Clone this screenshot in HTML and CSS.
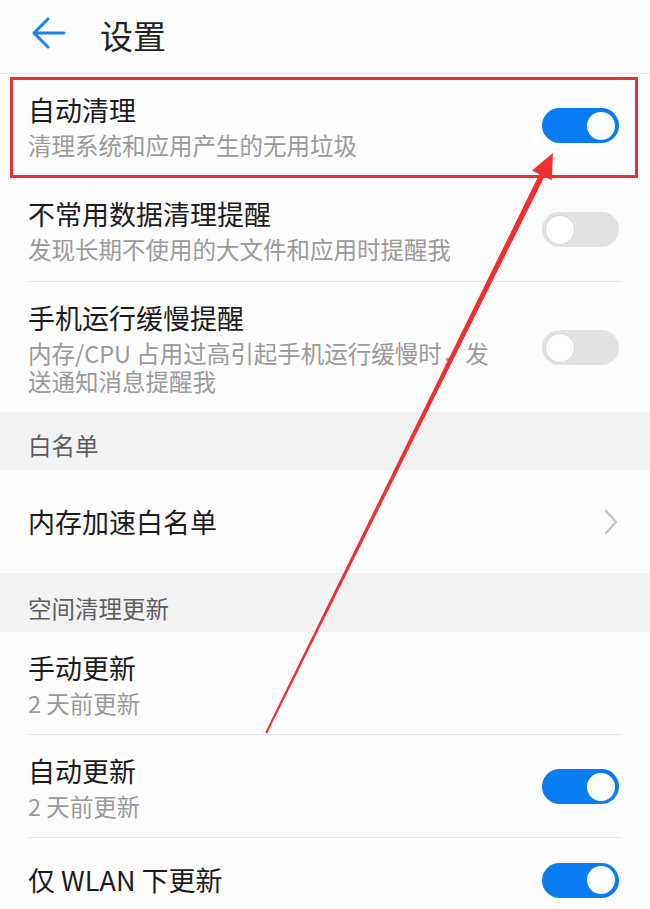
FILE: index.html
```html
<!DOCTYPE html>
<html lang="zh-CN">
<head>
<meta charset="utf-8">
<title>设置</title>
<link rel="stylesheet" href="styles.css">
</head>
<body>
<div class="page">
  <header class="topbar">
    <svg class="back" width="34" height="32" viewBox="0 0 34 32" aria-hidden="true">
      <path d="M32 16 H3 M16 2 L2 16 L16 30" fill="none" stroke="#1f80f0" stroke-width="3" stroke-linecap="round" stroke-linejoin="round"/>
    </svg>
    <h1 class="title">设置</h1>
  </header>

  <div class="row two">
    <div class="text">
      <div class="name">自动清理</div>
      <div class="desc">清理系统和应用产生的无用垃圾</div>
    </div>
    <span class="switch on"><span class="knob"></span></span>
  </div>
  <div class="divider"></div>

  <div class="row two">
    <div class="text">
      <div class="name">不常用数据清理提醒</div>
      <div class="desc">发现长期不使用的大文件和应用时提醒我</div>
    </div>
    <span class="switch"><span class="knob"></span></span>
  </div>
  <div class="divider"></div>

  <div class="row two tight">
    <div class="text">
      <div class="name">手机运行缓慢提醒</div>
      <div class="desc">内存/CPU 占用过高引起手机运行缓慢时，发送通知消息提醒我</div>
    </div>
    <span class="switch"><span class="knob"></span></span>
  </div>

  <div class="section">白名单</div>

  <div class="row single">
    <div class="text"><div class="name">内存加速白名单</div></div>
    <svg class="chev" width="14" height="26" viewBox="0 0 14 26" aria-hidden="true">
      <path d="M2 2 L12 13 L2 24" fill="none" stroke="#c4c4c4" stroke-width="2.2" stroke-linecap="round" stroke-linejoin="round"/>
    </svg>
  </div>

  <div class="section second">空间清理更新</div>

  <div class="row two tight">
    <div class="text">
      <div class="name">手动更新</div>
      <div class="desc">2 天前更新</div>
    </div>
  </div>
  <div class="divider"></div>

  <div class="row two tight">
    <div class="text">
      <div class="name">自动更新</div>
      <div class="desc">2 天前更新</div>
    </div>
    <span class="switch on"><span class="knob"></span></span>
  </div>
  <div class="divider"></div>

  <div class="row last">
    <div class="text"><div class="name">仅 WLAN 下更新</div></div>
    <span class="switch on"><span class="knob"></span></span>
  </div>

  <div class="highlight"></div>
  <svg class="pointer" width="650" height="909" viewBox="0 0 650 909" aria-hidden="true">
    <polygon points="265.2,732.6 539.3,174.2 532,170.5 553,153 551.8,180.3 544.4,176.8 267,733.4" fill="#f0302e"/>
  </svg>
</div>
</body>
</html>
```

FILE: styles.css
```css
html, body {
  margin: 0;
  padding: 0;
  background: #fdfdfd;
}

body {
  font-family: "Noto Sans CJK SC", "Noto Sans", sans-serif;
  color: #1c1c1c;
}

.page {
  position: relative;
  width: 650px;
  height: 909px;
  overflow: hidden;
}

.topbar {
  display: flex;
  align-items: center;
  height: 74px;
  padding-left: 32px;
  border-bottom: 1px solid #e6e6e6;
  box-sizing: border-box;
}

.back {
  flex: none;
  margin-top: -7px;
}

.title {
  margin: -3px 0 0 34px;
  font-size: 33px;
  font-weight: 400;
  line-height: 40px;
  color: #222;
}

.row {
  display: flex;
  align-items: center;
  padding: 0 31px 0 28px;
  box-sizing: border-box;
}

.row.two {
  padding-top: 18px;
  padding-bottom: 18px;
}

.row.two.tight {
  padding-bottom: 17px;
}

.row.single {
  height: 103px;
}

.row.last {
  height: 84px;
}

.text {
  flex: 1;
  min-width: 0;
  padding-right: 40px;
}

.name {
  font-size: 27px;
  line-height: 36px;
  color: #1c1c1c;
}

.desc {
  margin-top: 3px;
  font-size: 23.5px;
  line-height: 28px;
  color: #9a9a9a;
}

.divider {
  height: 1px;
  margin: 0 28px;
  background: #e8e8e8;
}

.section {
  background: #f2f2f2;
  padding: 18px 28px 10px;
  font-size: 23.5px;
  line-height: 30px;
  color: #5e5e5e;
}

.section.second {
  padding-top: 20px;
  padding-bottom: 9px;
}

.switch {
  flex: none;
  display: flex;
  align-items: center;
  width: 77px;
  height: 35px;
  padding: 0 4px;
  box-sizing: border-box;
  border-radius: 18px;
  background: #e2e2e2;
}

.knob {
  width: 28px;
  height: 28px;
  border-radius: 50%;
  background: #fff;
  box-shadow: 0 0 0 1px #d6d6d6;
}

.switch.on {
  background: #0a7cf2;
  justify-content: flex-end;
}

.switch.on .knob {
  box-shadow: none;
}

.chev {
  flex: none;
  margin-right: 1px;
}

.highlight {
  position: absolute;
  left: 10px;
  top: 77px;
  width: 628px;
  height: 101px;
  box-sizing: border-box;
  border: 3px solid #ec3030;
}

.pointer {
  position: absolute;
  left: 0;
  top: 0;
}
```
